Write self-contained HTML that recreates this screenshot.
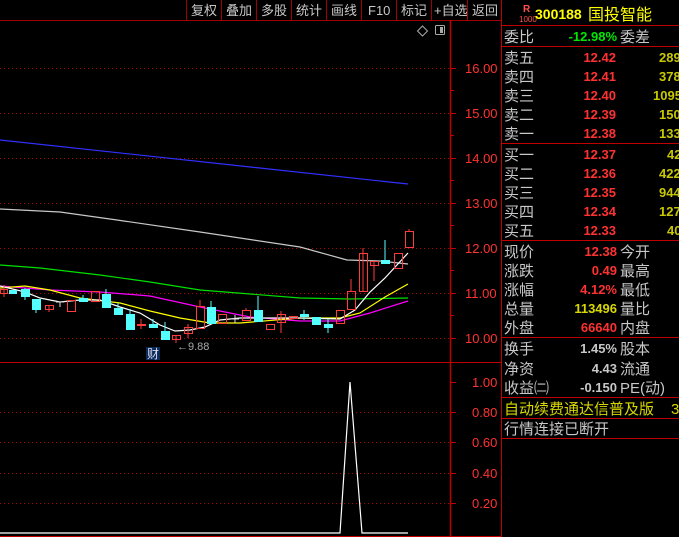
<!DOCTYPE html>
<html><head><meta charset="utf-8"><style>
html,body{margin:0;padding:0;background:#000;width:679px;height:537px;overflow:hidden}
svg{display:block}
.cn{font-family:"Liberation Sans","WenQuanYi Zen Hei","Noto Sans CJK SC",sans-serif;font-size:15px;fill:#c8c8c8}
.n{font-family:"Liberation Sans",sans-serif;font-size:13px;font-weight:bold}
.ax{font-family:"Liberation Sans",sans-serif;font-size:13px;fill:#ff3232}
.tb{font-family:"Liberation Sans","WenQuanYi Zen Hei","Noto Sans CJK SC",sans-serif;font-size:13px;fill:#c8c8c8}
</style></head><body>
<svg width="679" height="537" viewBox="0 0 679 537" xmlns="http://www.w3.org/2000/svg">
<rect width="679" height="537" fill="#000"/>
<!-- toolbar -->
<g stroke="#a00000" stroke-width="1">
<line x1="0" y1="20.5" x2="501" y2="20.5"/>
<line x1="186.5" y1="0" x2="186.5" y2="20"/><line x1="221.5" y1="0" x2="221.5" y2="20"/>
<line x1="256.5" y1="0" x2="256.5" y2="20"/><line x1="291.5" y1="0" x2="291.5" y2="20"/>
<line x1="326.5" y1="0" x2="326.5" y2="20"/><line x1="361.5" y1="0" x2="361.5" y2="20"/>
<line x1="396.5" y1="0" x2="396.5" y2="20"/><line x1="431.5" y1="0" x2="431.5" y2="20"/>
<line x1="467.5" y1="0" x2="467.5" y2="20"/>
</g>
<g class="tb">
<text x="191" y="15">复权</text><text x="226" y="15">叠加</text><text x="261" y="15">多股</text>
<text x="296" y="15">统计</text><text x="331" y="15">画线</text><text x="368" y="15">F10</text>
<text x="401" y="15">标记</text><text x="434" y="15">+自选</text><text x="472" y="15">返回</text>
</g>
<!-- icons -->
<path d="M422.5 26 L427.5 31 L422.5 36 L417.5 31 Z" fill="none" stroke="#aaa"/>
<rect x="435.5" y="25.5" width="9" height="9" fill="none" stroke="#aaa" rx="1"/><rect x="440" y="27" width="3" height="6" fill="#aaa"/>
<!-- chart frame -->
<line x1="450.5" y1="20" x2="450.5" y2="537" stroke="#c00000" stroke-width="1.5"/>
<line x1="0" y1="362.5" x2="501" y2="362.5" stroke="#c00000"/>
<line x1="0" y1="536.5" x2="501" y2="536.5" stroke="#c00000"/>
<!-- grid -->
<g stroke="#b00000" stroke-dasharray="1,3">
<line x1="0" y1="68.5" x2="450" y2="68.5"/><line x1="0" y1="113.5" x2="450" y2="113.5"/>
<line x1="0" y1="158.5" x2="450" y2="158.5"/><line x1="0" y1="203.5" x2="450" y2="203.5"/>
<line x1="0" y1="248.5" x2="450" y2="248.5"/><line x1="0" y1="293.5" x2="450" y2="293.5"/>
<line x1="0" y1="338.5" x2="450" y2="338.5"/>
<line x1="0" y1="412.5" x2="450" y2="412.5"/><line x1="0" y1="442.5" x2="450" y2="442.5"/>
<line x1="0" y1="473.5" x2="450" y2="473.5"/><line x1="0" y1="503.5" x2="450" y2="503.5"/>
</g>
<g stroke="#c00000">
<line x1="451" y1="68.5" x2="456" y2="68.5"/><line x1="451" y1="113.5" x2="456" y2="113.5"/>
<line x1="451" y1="158.5" x2="456" y2="158.5"/><line x1="451" y1="203.5" x2="456" y2="203.5"/>
<line x1="451" y1="248.5" x2="456" y2="248.5"/><line x1="451" y1="293.5" x2="456" y2="293.5"/>
<line x1="451" y1="338.5" x2="456" y2="338.5"/>
<line x1="451" y1="90.5" x2="454" y2="90.5"/><line x1="451" y1="135.5" x2="454" y2="135.5"/>
<line x1="451" y1="180.5" x2="454" y2="180.5"/><line x1="451" y1="225.5" x2="454" y2="225.5"/>
<line x1="451" y1="270.5" x2="454" y2="270.5"/><line x1="451" y1="315.5" x2="454" y2="315.5"/>
<line x1="451" y1="382.5" x2="456" y2="382.5"/><line x1="451" y1="412.5" x2="456" y2="412.5"/>
<line x1="451" y1="442.5" x2="456" y2="442.5"/><line x1="451" y1="473.5" x2="456" y2="473.5"/>
<line x1="451" y1="503.5" x2="456" y2="503.5"/>
</g>
<g class="ax">
<text x="465" y="73">16.00</text><text x="465" y="118">15.00</text><text x="465" y="163">14.00</text>
<text x="465" y="208">13.00</text><text x="465" y="253">12.00</text><text x="465" y="298">11.00</text>
<text x="465" y="343">10.00</text>
<text x="472" y="387">1.00</text><text x="472" y="417">0.80</text><text x="472" y="447">0.60</text>
<text x="472" y="478">0.40</text><text x="472" y="508">0.20</text>
</g>
<!-- MAs -->
<g fill="none" stroke-width="1.2">
<polyline stroke="#3030ff" points="0,140 408,184"/>
<polyline stroke="#c8c8c8" points="0,209 60,212 117,220 200,232 300,247 347,260 380,261 408,264"/>
<polyline stroke="#00e000" points="0,265 40,268 100,275 150,282 200,290 300,298 350,299 408,298"/>
<polyline stroke="#ff00ff" points="0,286 50,290 100,292 150,296 200,307 250,317 300,321 340,321 370,313 408,301"/>
<polyline stroke="#ffff00" points="0,288 25,286 50,290 80,298 120,303 150,311 180,318 210,323 240,323 300,318 340,318 360,313 385,297 408,284"/>
<polyline stroke="#ffffff" points="0,286 25,292 40,298 60,302 80,300 100,300 120,307 140,313 160,325 175,331 190,330 205,327 220,320 240,318 260,318 300,318 340,319 355,310 370,292 385,278 408,253"/>
</g>
<!-- candles -->
<g stroke-width="1">
<g stroke="#ff3c3c" fill="none">
<line x1="4" y1="285" x2="4" y2="297"/><rect x="0.5" y="289.5" width="7" height="4"/>
<line x1="49" y1="305" x2="49" y2="312"/><rect x="45.5" y="305.5" width="8" height="4"/>
<rect x="67.5" y="300.5" width="8" height="11"/>
<rect x="91.5" y="291.5" width="8" height="10"/>
<line x1="141" y1="319" x2="141" y2="329"/><rect x="137.5" y="324.5" width="8" height="1"/>
<line x1="176" y1="335" x2="176" y2="343"/><rect x="172.5" y="335.5" width="8" height="4"/>
<line x1="188" y1="324" x2="188" y2="338"/><rect x="184.5" y="327.5" width="8" height="6"/>
<line x1="200" y1="300" x2="200" y2="306"/><rect x="196.5" y="306.5" width="8" height="22"/>
<rect x="218.5" y="314.5" width="8" height="9"/>
<line x1="246" y1="308" x2="246" y2="310"/><rect x="242.5" y="310.5" width="8" height="10"/>
<rect x="266.5" y="324.5" width="8" height="5"/>
<line x1="281" y1="311" x2="281" y2="333"/><rect x="277.5" y="314.5" width="8" height="8"/>
<rect x="289.5" y="316.5" width="8" height="2"/>
<rect x="336.5" y="310.5" width="8" height="13"/>
<line x1="351" y1="279" x2="351" y2="291"/><rect x="347.5" y="291.5" width="8" height="18"/>
<line x1="363" y1="248" x2="363" y2="291"/><rect x="359.5" y="253.5" width="8" height="38"/>
<line x1="374" y1="261" x2="374" y2="281"/><rect x="370.5" y="261.5" width="8" height="4"/>
<rect x="394.5" y="253.5" width="8" height="15"/>
<line x1="409" y1="229" x2="409" y2="231"/><rect x="405.5" y="231.5" width="8" height="16"/>
</g>
<g stroke="#54ffff" fill="#54ffff">
<rect x="9.5" y="290.5" width="7" height="3"/>
<line x1="25" y1="288" x2="25" y2="300"/><rect x="21.5" y="289.5" width="8" height="7"/>
<line x1="36" y1="299" x2="36" y2="313"/><rect x="32.5" y="299.5" width="8" height="10"/>
<line x1="83" y1="295" x2="83" y2="301"/><rect x="79.5" y="298.5" width="8" height="3"/>
<line x1="106" y1="289" x2="106" y2="307"/><rect x="102.5" y="294.5" width="8" height="13"/>
<line x1="118" y1="303" x2="118" y2="314"/><rect x="114.5" y="308.5" width="8" height="6"/>
<line x1="130" y1="309" x2="130" y2="330"/><rect x="126.5" y="314.5" width="8" height="15"/>
<line x1="153" y1="319" x2="153" y2="327"/><rect x="149.5" y="324.5" width="8" height="3"/>
<line x1="165" y1="322" x2="165" y2="340"/><rect x="161.5" y="331.5" width="8" height="8"/>
<line x1="211" y1="301" x2="211" y2="323"/><rect x="207.5" y="307.5" width="8" height="16"/>
<line x1="258" y1="296" x2="258" y2="321"/><rect x="254.5" y="310.5" width="8" height="11"/>
<line x1="304" y1="310" x2="304" y2="320"/><rect x="300.5" y="314.5" width="8" height="2"/>
<rect x="312.5" y="317.5" width="8" height="7"/>
<line x1="328" y1="319" x2="328" y2="333"/><rect x="324.5" y="324.5" width="8" height="3"/>
<line x1="385" y1="240" x2="385" y2="260"/><rect x="381.5" y="260.5" width="8" height="3"/>
</g>
<g stroke="#dddddd"><line x1="56" y1="302" x2="64" y2="302"/><line x1="60" y1="302" x2="60" y2="307"/>
<line x1="231" y1="319" x2="239" y2="319"/><line x1="235" y1="315" x2="235" y2="323"/></g>
</g>
<rect x="146" y="347" width="14" height="13" fill="#0a2a5a"/>
<text x="147" y="358" font-family="'WenQuanYi Zen Hei','Noto Sans CJK SC',sans-serif" font-size="12" fill="#dde">财</text>
<text x="177" y="350" font-family="'Liberation Sans',sans-serif" font-size="11" fill="#aaa">←9.88</text>
<!-- indicator -->
<polyline fill="none" stroke="#fff" stroke-width="1.2" points="0,533 340,533 350,382 362,533 408,533"/>
<!-- right panel -->
<line x1="501.5" y1="0" x2="501.5" y2="537" stroke="#c00000"/>
<g stroke="#c00000">
<line x1="501" y1="25.5" x2="679" y2="25.5"/><line x1="501" y1="46.5" x2="679" y2="46.5"/>
<line x1="501" y1="143.5" x2="679" y2="143.5"/><line x1="501" y1="240.5" x2="679" y2="240.5"/>
<line x1="501" y1="337.5" x2="679" y2="337.5"/><line x1="501" y1="397.5" x2="679" y2="397.5"/>
<line x1="501" y1="418.5" x2="679" y2="418.5"/><line x1="501" y1="438.5" x2="679" y2="438.5"/>
</g>
<text x="523" y="12" font-family="'Liberation Sans',sans-serif" font-size="10" font-weight="bold" fill="#ff5050">R</text>
<text x="519" y="22" font-family="'Liberation Sans',sans-serif" font-size="8" fill="#ff5050">1000</text>
<text x="535" y="19" class="n" fill="#ffff00" style="font-size:14px">300188</text>
<text x="588" y="20" font-family="'WenQuanYi Zen Hei','Noto Sans CJK SC',sans-serif" font-size="16" fill="#ffff00">国投智能</text>
<g class="cn">
<text x="504" y="42">委比</text><text x="620" y="42">委差</text>
<text x="504" y="63">卖五</text><text x="504" y="82">卖四</text><text x="504" y="101">卖三</text><text x="504" y="120">卖二</text><text x="504" y="139">卖一</text>
<text x="504" y="160">买一</text><text x="504" y="179">买二</text><text x="504" y="198">买三</text><text x="504" y="217">买四</text><text x="504" y="236">买五</text>
<text x="504" y="257">现价</text><text x="620" y="257">今开</text>
<text x="504" y="276">涨跌</text><text x="620" y="276">最高</text>
<text x="504" y="295">涨幅</text><text x="620" y="295">最低</text>
<text x="504" y="314">总量</text><text x="620" y="314">量比</text>
<text x="504" y="333">外盘</text><text x="620" y="333">内盘</text>
<text x="504" y="354">换手</text><text x="620" y="354">股本</text>
<text x="504" y="374">净资</text><text x="620" y="374">流通</text>
<text x="504" y="393">收益㈡</text><text x="620" y="393">PE(动)</text>
<text x="504" y="414" style="fill:#d8d800">自动续费通达信普及版</text><text x="671" y="414" style="fill:#d8d800">3</text>
<text x="504" y="434">行情连接已断开</text>
</g>
<g class="n" text-anchor="end">
<text x="617" y="41" fill="#00e600">-12.98%</text>
<g fill="#ff3232">
<text x="616" y="62">12.42</text><text x="616" y="81">12.41</text><text x="616" y="100">12.40</text><text x="616" y="119">12.39</text><text x="616" y="138">12.38</text>
<text x="616" y="159">12.37</text><text x="616" y="178">12.36</text><text x="616" y="197">12.35</text><text x="616" y="216">12.34</text><text x="616" y="235">12.33</text>
<text x="617" y="256">12.38</text><text x="617" y="275">0.49</text><text x="617" y="294">4.12%</text><text x="617" y="332">66640</text>
</g>
<text x="617" y="313" fill="#d8d800">113496</text>
<g fill="#c8c8c8"><text x="617" y="353">1.45%</text><text x="617" y="373">4.43</text><text x="617" y="392">-0.150</text></g>
</g>
<g class="n" fill="#c8c800">
<text x="659" y="62">289</text><text x="659" y="81">378</text><text x="653" y="100">1095</text><text x="659" y="119">150</text><text x="659" y="138">133</text>
<text x="667" y="159">42</text><text x="659" y="178">422</text><text x="659" y="197">944</text><text x="659" y="216">127</text><text x="667" y="235">40</text>
</g>
</svg>
</body></html>
